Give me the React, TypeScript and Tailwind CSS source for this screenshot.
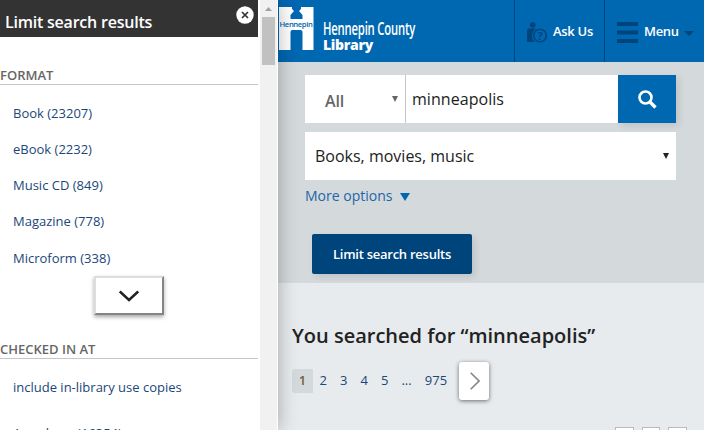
import React from "react";

const formats = ["Book (23207)", "eBook (2232)", "Music CD (849)", "Magazine (778)", "Microform (338)"];

function SectionTitle({ children }: { children: React.ReactNode }) {
  return (
    <h2 className="h-[18px] w-[258px] whitespace-nowrap border-b border-[#c6c6c6] text-[13px] font-semibold leading-[17px] text-[#666]">
      {children}
    </h2>
  );
}

function Logo() {
  return (
    <svg className="block h-[62px] w-[142px]" viewBox="278 0 142 62" fill="none">
      <path d="M279 7H292V9L294 11L290.5 15V19H302.5V15L299 11L301 9V7H313.5V50H302.5V32Q302.500 30 300.500 30H292.500Q290.500 30 290.500 32V50H279Z" fill="#fff" />
      <text x="279.500" y="27" textLength="33" lengthAdjust="spacingAndGlyphs" className="fill-[#0067b1] font-['Open_Sans',sans-serif] text-[6.500px] font-semibold">Hennepin</text>
      <text x="323" y="35" textLength="92" lengthAdjust="spacingAndGlyphs" className="fill-white font-['Open_Sans',sans-serif] text-[18px]">Hennepin County</text>
      <text x="323" y="50" textLength="50" lengthAdjust="spacingAndGlyphs" className="fill-white font-['Open_Sans',sans-serif] text-[14px] font-extrabold">Library</text>
    </svg>
  );
}

function Sidebar() {
  return (
    <aside className="relative z-10 flex h-full w-[278px] shrink-0 bg-white shadow-[0_0_18px_rgba(0,0,0,0.3)]">
      <div className="flex h-full w-[260px] flex-col overflow-hidden">
        <header className="flex h-[37px] w-[258px] shrink-0 items-start justify-between bg-[#333] pl-[5px] pr-1">
          <h1 className="mt-[11px] whitespace-nowrap text-base font-semibold leading-[22px] tracking-[-0.220px] text-white">Limit search results</h1>
          <svg className="mt-1.5 h-[18px] w-[18px]" viewBox="0 0 18 18">
            <circle cx="9" cy="9" r="8.700" fill="#fff" />
            <path d="M6 6L12 12M12 6L6 12" stroke="#333" strokeWidth="1.700" />
          </svg>
        </header>
        <section className="mt-[30px] shrink-0">
          <SectionTitle>FORMAT</SectionTitle>
          <ul className="pl-[13px] pt-[10px] text-[13px] text-[#1b4779]">
            {formats.map((f) => (
              <li key={f} className="h-9 whitespace-nowrap leading-9 last:h-[37px] last:pt-px">{f}</li>
            ))}
          </ul>
          <button className="ml-[94px] flex h-[39px] w-[70px] items-center justify-center border-2 border-b-[#858585] border-l-[#ddd] border-r-[#858585] border-t-[#ddd] bg-white shadow-[0_2px_4px_rgba(0,0,0,0.35)]">
            <svg className="h-3 w-5" viewBox="0 0 20 12" fill="none" stroke="#222" strokeWidth="2.500">
              <path d="M.8 1.500L10 10L19.200 1.500" />
            </svg>
          </button>
        </section>
        <section className="mt-[26px] shrink-0">
          <SectionTitle>CHECKED IN AT</SectionTitle>
          <ul className="pl-[13px] pt-[10px] text-[13px] text-[#1b4779]">
            <li className="h-[46px] whitespace-nowrap leading-9">include in-library use copies</li>
            <li className="whitespace-nowrap leading-9">Anywhere (16354)</li>
          </ul>
        </section>
      </div>
      <div className="flex w-[17px] flex-col items-center bg-[#f1f1f1]">
        <svg className="mt-[7px] h-1 w-[7px]" viewBox="0 0 7 4"><path d="M0 4L3.500 0L7 4Z" fill="#a3a3a3" /></svg>
        <div className="mt-1.5 h-12 w-[13px] bg-[#c1c1c1]" />
      </div>
    </aside>
  );
}

function TopBar() {
  return (
    <header className="flex h-[62px] bg-[#0067b1] text-[13px] font-semibold tracking-[-0.300px] text-white">
      <Logo />
      <a className="ml-auto flex w-[90px] items-center whitespace-nowrap border-l border-[#00447c] pl-3">
        <svg className="mt-1 h-[22px] w-5" viewBox="0 0 20 22">
          <circle cx="5.700" cy="3" r="2.800" fill="#00447c" />
          <path d="M0 20V8Q0 6.500 1.500 6.500H9Q5 9 5 13.500Q5 17.500 8 20Z" fill="#00447c" />
          <circle cx="13" cy="13.500" r="6.300" fill="none" stroke="#00447c" strokeWidth="1.500" />
          <text x="13" y="17.500" textAnchor="middle" className="fill-[#00447c] font-['Open_Sans',sans-serif] text-[11px] font-bold">?</text>
        </svg>
        <span className="ml-1.5 mt-0.5">Ask Us</span>
      </a>
      <a className="flex w-[100px] items-center whitespace-nowrap border-l border-[#00447c] pl-3">
        <svg className="mt-[3px] h-[21px] w-[21px]" viewBox="0 0 21 21"><path d="M0 0H21V4H0ZM0 8.500H21V12.500H0ZM0 17H21V21H0Z" fill="#00447c" /></svg>
        <span className="ml-1.5 mt-0.5">Menu</span>
        <svg className="ml-[5px] mt-1 h-[5px] w-2.5" viewBox="0 0 10 5"><path d="M0 0H10L5 5Z" fill="#00447c" /></svg>
      </a>
    </header>
  );
}

function SearchForm() {
  return (
    <section className="h-[221px] bg-[#d4d9dc] pl-[27px] pt-[13px]">
      <div className="flex h-12 w-[371px] bg-white">
        <div className="flex w-[101px] items-center border-r border-[#c6c6c6] pl-5 text-[#666]">
          <span className="mt-1 w-[66px] text-base font-semibold tracking-[-0.100px]">All</span>
          <svg className="ml-px h-1.5 w-1.5" viewBox="0 0 6 6"><path d="M0 0H6L3 6Z" fill="#666" /></svg>
        </div>
        <div className="flex flex-1 items-center pl-1.5 text-base tracking-[0.050px] text-[#222]">minneapolis</div>
        <button className="flex w-[58px] items-center justify-center bg-[#0067b1] shadow-[3px_3px_7px_rgba(0,0,0,0.1)]">
          <svg className="h-[19px] w-[19px]" viewBox="0 0 19 19" fill="none" stroke="#fff">
            <circle cx="7.500" cy="7.500" r="6" strokeWidth="2.600" />
            <path d="M12 12L17.500 17.500" strokeWidth="3.400" />
          </svg>
        </button>
      </div>
      <div className="mt-[9px] flex h-12 w-[371px] items-center justify-between bg-white pl-2.5 pr-[7px] text-base text-[#222]">
        <span>Books, movies, music</span>
        <svg className="h-1.5 w-1.5" viewBox="0 0 6 6"><path d="M0 0H6L3 6Z" fill="#222" /></svg>
      </div>
      <a className="mt-1.5 flex h-5 items-center text-sm leading-5 text-[#1d66a9]">
        More options
        <svg className="ml-2 mt-0.5 h-2 w-2.5" viewBox="0 0 10 8"><path d="M0 0H10L5 8Z" fill="#0067b1" /></svg>
      </a>
      <button className="ml-[7px] mt-7 flex h-10 w-40 items-center justify-center whitespace-nowrap rounded-[2px] bg-[#00447c] pt-0.5 text-[13px] font-semibold tracking-[-0.250px] text-white shadow-[3px_3px_7px_rgba(0,0,0,0.1)]">
        Limit search results
      </button>
    </section>
  );
}

function Results() {
  return (
    <section className="flex h-[147px] flex-col pl-3.5">
      <h2 className="mt-[38px] whitespace-nowrap text-xl font-semibold leading-[30px] text-[#222]">You searched for “minneapolis”</h2>
      <nav className="mt-[11px] flex h-[38px] shrink-0 items-center text-[13px] text-[#1b4779]">
        <span className="flex h-6 w-[21px] items-center justify-center rounded-l-[3px] bg-[#d4d9dc] font-semibold text-[#765c38]">1</span>
        <span className="w-[20.500px] text-center">2</span>
        <span className="w-[20.500px] text-center">3</span>
        <span className="w-[20.500px] text-center">4</span>
        <span className="w-[20.500px] text-center">5</span>
        <span className="w-[23px] text-center">...</span>
        <span className="w-9 text-center">975</span>
        <button className="ml-[5px] flex h-[38px] w-[30px] items-center justify-center rounded-[3px] bg-white shadow-[0_1px_4px_rgba(0,0,0,0.55)]">
          <svg className="ml-0.5 h-[18px] w-2.5" viewBox="0 0 10 18" fill="none" stroke="#858789" strokeWidth="1.600"><path d="M.7 .7L9 9L.7 17.300" /></svg>
        </button>
      </nav>
      <div className="mt-[27px] flex h-[3px] shrink-0 gap-2 overflow-hidden pl-[323px]">
        <i className="h-5 w-[19px] shrink-0 border border-[#bbb] bg-white" />
        <i className="h-5 w-[18px] shrink-0 border border-[#bbb] bg-white" />
        <i className="h-5 w-[19px] shrink-0 border border-[#bbb] bg-white" />
      </div>
    </section>
  );
}

export default function App() {
  return (
    <div className="flex h-[430px] w-[704px] overflow-hidden bg-[#e7ebee] font-['Open_Sans',sans-serif]">
      <Sidebar />
      <main className="w-[426px]">
        <TopBar />
        <SearchForm />
        <Results />
      </main>
    </div>
  );
}
